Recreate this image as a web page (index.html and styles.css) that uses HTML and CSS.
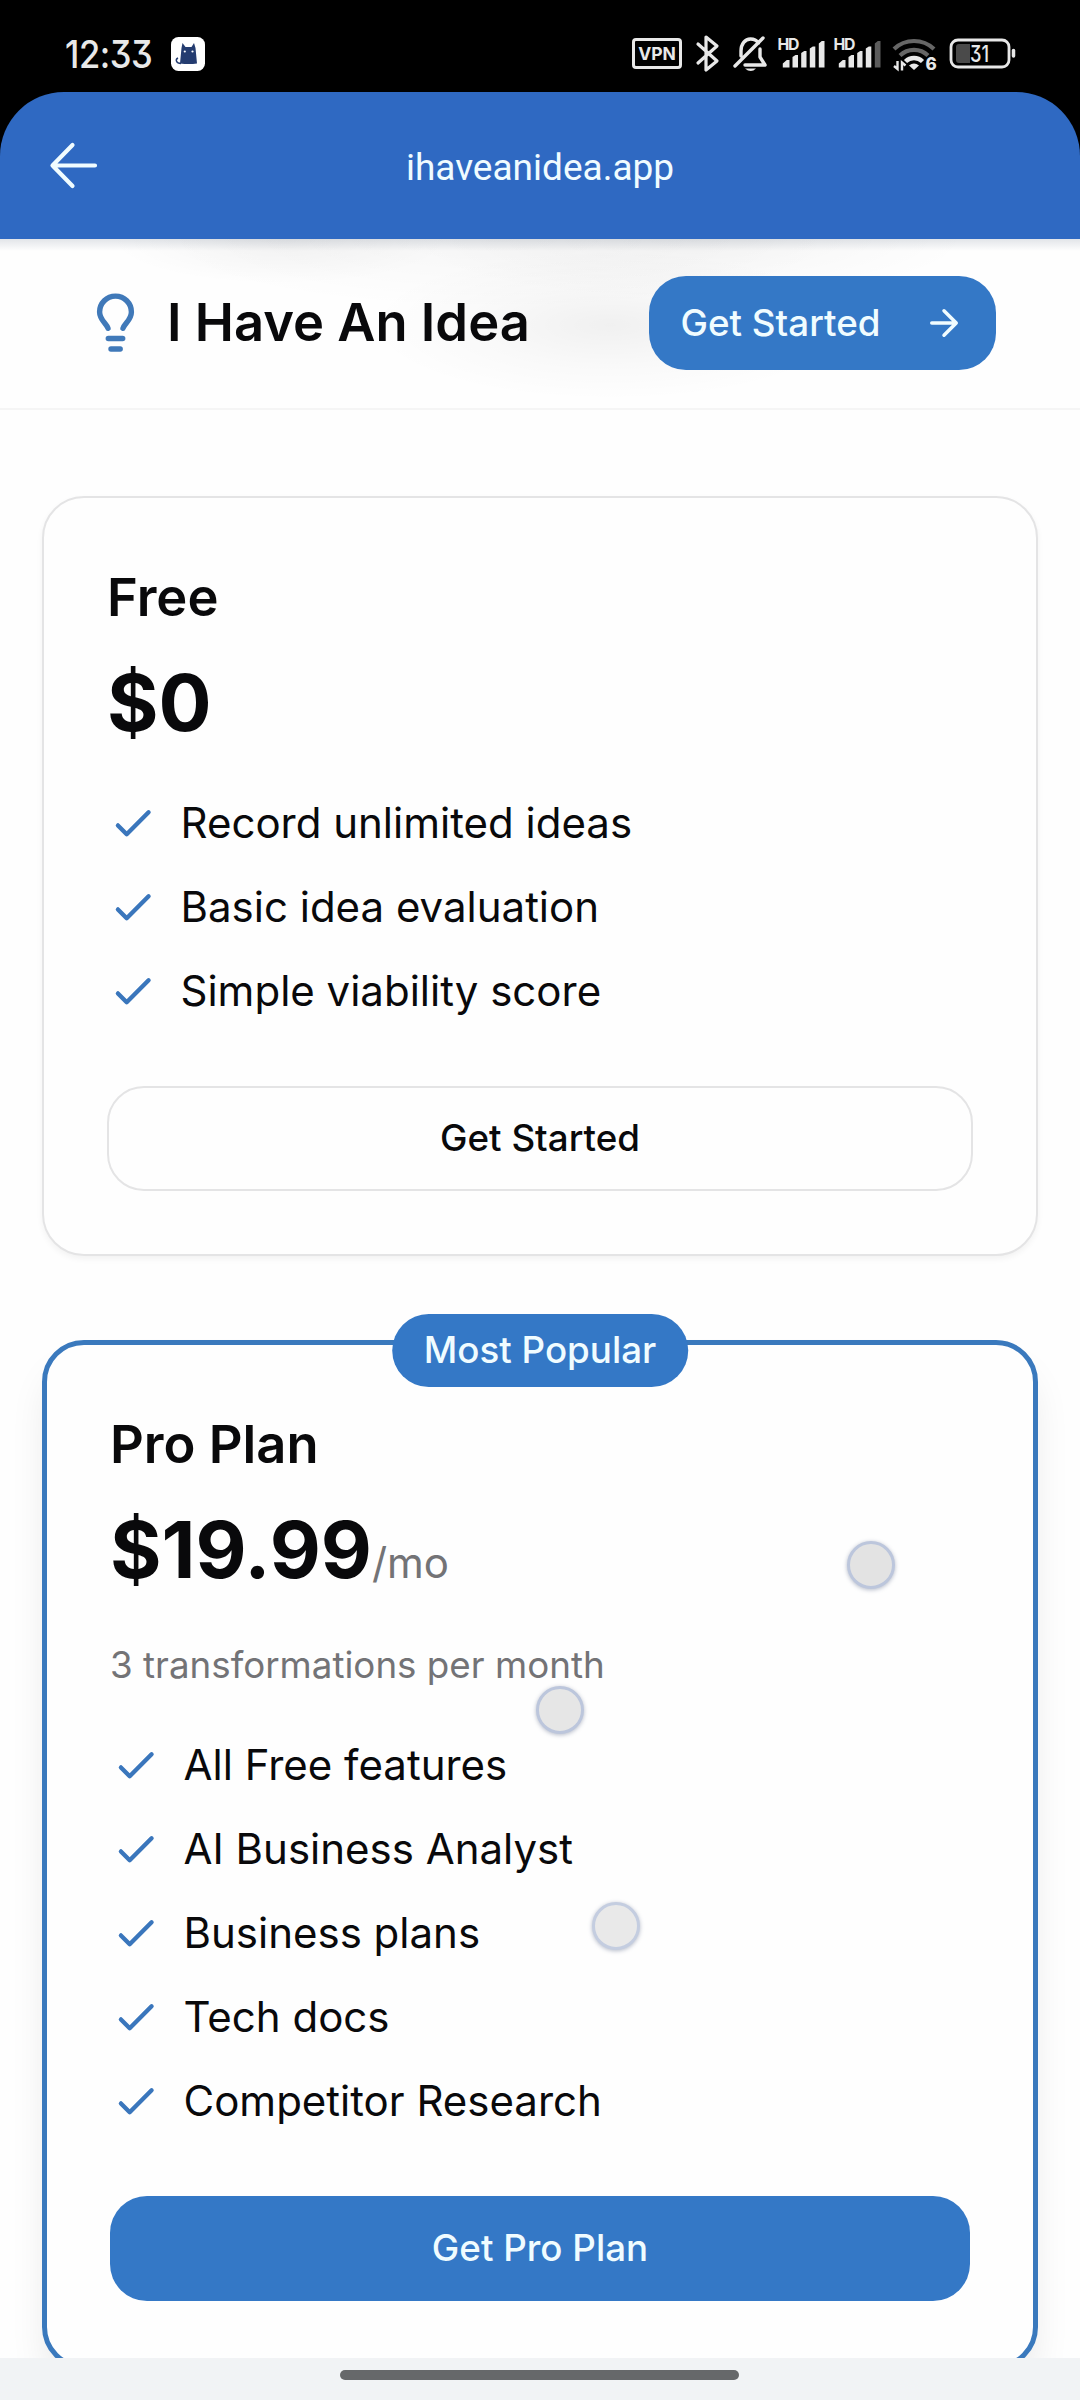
FILE: index.html
```html
<!DOCTYPE html>
<html lang="en">
<head>
<meta charset="utf-8">
<title>I Have An Idea</title>
<link rel="stylesheet" href="styles.css">
</head>
<body>
<svg class="defs" width="0" height="0"><symbol id="check" viewBox="0 0 24 24"><path d="M5 13l4 4L19 7" fill="none" stroke="currentColor" stroke-width="2" stroke-linecap="round" stroke-linejoin="round"/></symbol></svg>
<div class="screen">
  <div class="status">
    <span class="clock">12:33</span>
    <svg class="cat" width="34" height="34" viewBox="0 0 34 34"><rect width="34" height="34" rx="7.500" fill="#fff"/><path d="M11.500 6l3 4h6l2.500-4 1.500 5 1.500 15.500q-8 1-17 0L10.500 11z" fill="#243c70"/><path d="M10 26.500c-5 0-6-4-3-5.500" fill="none" stroke="#243c70" stroke-width="1.400"/><circle cx="13.800" cy="14.500" r="1.100" fill="#fff"/><circle cx="21.500" cy="14.500" r="1.100" fill="#fff"/></svg>
    <svg class="tray" width="390" height="44" viewBox="630 30 390 44" fill="none" stroke="#e8e8e8">
      <rect x="633.500" y="39.500" width="47" height="28" rx="2.500" stroke-width="3"/>
      <text x="657" y="60" class="t-vpn" text-anchor="middle">VPN</text>
      <path d="M698 44l19 17-11 9V37l11 9-19 17" stroke-width="3.200" stroke-linejoin="round" stroke-linecap="round"/>
      <path d="M741 56V51c0-7 4-12 9.500-12 4 0 6 1 8 4M760 49v8l5 8H745M763 38L735 66" stroke-width="3.400" stroke-linecap="round" stroke-linejoin="round"/>
      <path d="M745 68.500h11q-5 5-11 0z" fill="#e8e8e8" stroke="none"/>
      <text x="777.500" y="50" class="t-hd" textLength="22">HD</text>
      <path d="M782.800 67.500v-4l4-3.500h2.700v7.500zM792.500 67.500V57l3-2h2.500v12.500zM801.200 67.500V53l3-2h2.300v16.500zM809.800 67.500V48.500l3-2h2.500v21zM818.800 67.500V43.500l3-2.500h2.700v26.500z" fill="#e8e8e8" stroke="none"/>
      <text x="833.500" y="50" class="t-hd" textLength="22">HD</text>
      <path d="M838.800 67.500v-4l4-3.500h2.700v7.500zM848.500 67.500V57l3-2h2.500v12.500zM857.200 67.500V53l3-2h2.300v16.500zM865.800 67.500V48.500l3-2h2.500v21z" fill="#e8e8e8" stroke="none"/>
      <path d="M874.800 67.500V43.500l3-2.500h2.700v26.500z" fill="#5c5c5c" stroke="none"/>
      <path d="M894 49a29 29 0 0 1 40 0M900 55.500a20 20 0 0 1 28 0" stroke="#666" stroke-width="4.200"/>
      <path d="M905.500 61.500a12 12 0 0 1 17 0" stroke-width="4.400"/>
      <path d="M909 65.500q5-4 10 0l-5 4.500z" fill="#e8e8e8" stroke="none"/>
      <path d="M897.500 61v8l-3.500-3M902 70.500v-8l3.500 3" stroke-width="2.400"/>
      <text x="931" y="70" class="t-six" text-anchor="middle">6</text>
      <rect x="951" y="40" width="58" height="27" rx="7" stroke-width="2.800"/>
      <path d="M959 44h11v19h-11q-3 0-3-3V47q0-3 3-3z" fill="#4a4a4a" stroke="none"/>
      <text x="970" y="61.800" class="t-bat" textLength="19" lengthAdjust="spacingAndGlyphs">31</text>
      <path d="M1013.500 50.500v5.500" stroke-width="3.500" stroke-linecap="round"/>
    </svg>
  </div>
  <div class="appbar">
    <svg class="back" width="50" height="50" viewBox="0 0 50 50" fill="none" stroke="#f0fcff" stroke-width="4.200" stroke-linecap="round" stroke-linejoin="round"><path d="M47 24.500H4.500M24.500 4L4.500 24.500 24.500 45"/></svg>
    <span class="host">ihaveanidea.app</span>
  </div>
  <header class="header">
    <svg class="bulb" width="42" height="63" viewBox="0 0 42 63" fill="none" stroke="#4079b9" stroke-width="5.400" stroke-linecap="round"><path d="M14 37.300C12.500 32.500 5.600 29 5.600 21a15.900 15.900 0 0 1 31.800 0C37.400 29 30.500 32.500 29 37.300M14.300 47.500h14.400M17 58h9.200"/></svg>
    <h1 class="brand">I Have An Idea</h1>
    <a class="cta">Get Started<svg width="42" height="42" viewBox="0 0 24 24" fill="none" stroke="currentColor" stroke-width="2" stroke-linecap="round" stroke-linejoin="round"><path d="M5 12h14M12 5l7 7-7 7"/></svg></a>
  </header>
  <main class="plans">
    <section class="card">
      <h2 class="name">Free</h2>
      <div class="price">$0</div>
      <ul class="list">
        <li><svg class="tick"><use href="#check"/></svg><span class="feature">Record unlimited ideas</span></li>
        <li><svg class="tick"><use href="#check"/></svg><span class="feature">Basic idea evaluation</span></li>
        <li><svg class="tick"><use href="#check"/></svg><span class="feature">Simple viability score</span></li>
      </ul>
      <a class="button outline">Get Started</a>
    </section>
    <section class="card pro">
      <span class="badge">Most Popular</span>
      <h2 class="name">Pro Plan</h2>
      <div class="price">$19.99<span class="per">/mo</span></div>
      <p class="quota">3 transformations per month</p>
      <ul class="list">
        <li><svg class="tick"><use href="#check"/></svg><span class="feature">All Free features</span></li>
        <li><svg class="tick"><use href="#check"/></svg><span class="feature">AI Business Analyst</span></li>
        <li><svg class="tick"><use href="#check"/></svg><span class="feature">Business plans</span></li>
        <li><svg class="tick"><use href="#check"/></svg><span class="feature">Tech docs</span></li>
        <li><svg class="tick"><use href="#check"/></svg><span class="feature">Competitor Research</span></li>
      </ul>
      <a class="button">Get Pro Plan</a>
    </section>
  </main>
  <footer class="navbar"><span class="handle"></span></footer>
  <i class="touch touch-a"></i><i class="touch touch-b"></i><i class="touch touch-c"></i>
</div>
</body>
</html>
```
FILE: styles.css
```css
* { box-sizing: border-box; margin: 0; padding: 0; }
body { background: #fefefe; font-family: Inter, "Liberation Sans", sans-serif; color: #09090b; }
.defs { display: block; }
.screen { position: relative; width: 1080px; height: 2400px; overflow: hidden; display: flex; flex-direction: column; background: linear-gradient(#000 0 180px, #fefefe 180px); }

.status { flex: none; height: 92px; display: flex; align-items: center; padding: 0 60px 0 65px; }
.clock { width: 106px; padding-top: 16px; font-size: 38px; font-weight: 500; line-height: 44px; letter-spacing: -0.500px; color: #e8e8e8; font-feature-settings: "cv09"; white-space: nowrap; transform: scaleX(.91); transform-origin: left; }
.cat { margin-top: 16px; }
.tray { margin-left: auto; margin-top: 12px; }
.tray text { stroke: none; fill: #e8e8e8; font-family: Inter, sans-serif; font-feature-settings: "cv09"; }
.t-vpn { font-size: 17.500px; font-weight: 700; }
.t-hd { font-size: 15.800px; font-weight: 700; }
.t-six { font-size: 17px; font-weight: 800; }
.t-bat { font-size: 23px; font-weight: 500; }

.appbar { flex: none; height: 147px; display: grid; grid-template-columns: 96px 1fr 96px; align-items: center; background: #2f69c2; border-radius: 64px 64px 0 0; }
.back { margin-left: 48px; }
.host { text-align: center; font-family: Roboto, sans-serif; font-size: 37px; line-height: 44px; padding-top: 4px; color: #f0fcff; }

.header { flex: none; height: 171px; display: flex; align-items: center; padding: 0 84px 2px 94px; border-bottom: 2px solid #f5f5f5;
  background:
    linear-gradient(rgba(40, 60, 90, .13), rgba(40, 60, 90, 0) 12px),
    radial-gradient(ellipse 170px 45px at 280px 0, rgba(0, 0, 0, .045), transparent),
    radial-gradient(ellipse 340px 70px at 500px 0, rgba(0, 0, 0, .03), transparent),
    radial-gradient(ellipse 280px 60px at 690px 0, rgba(0, 0, 0, .04), transparent),
    radial-gradient(ellipse 240px 75px at 610px 86px, rgba(0, 0, 0, .055), rgba(0, 0, 0, .02) 55%, transparent),
    #fefefe; }
.brand { margin-left: 31px; font-size: 52.500px; line-height: 73.500px; font-weight: 600; white-space: nowrap; }
.cta { margin-left: auto; width: 347px; height: 94px; padding: 0 31.500px; border-radius: 37px; display: flex; align-items: center; justify-content: space-between; background: #3478c6; color: #f0fcff; font-size: 36.750px; font-weight: 500; white-space: nowrap; }

.plans { flex: 1; min-height: 0; overflow: hidden; padding: 86px 42px 0; display: flex; flex-direction: column; gap: 84px; }
.card { position: relative; flex: none; padding: 63px; border: 2px solid #e4e4e5; border-radius: 42px; background: #fefefe; box-shadow: 0 3px 6px rgba(0, 0, 0, .05); display: flex; flex-direction: column; }
.pro { border: 5px solid #3a79bd; box-shadow: 0 26px 40px -8px rgba(0, 0, 0, .1); }
.badge { position: absolute; top: -31px; left: 50%; transform: translateX(-50%); height: 73px; padding: 0 31.500px; border-radius: 37px; background: #3478c6; color: #f0fcff; font-size: 36.750px; line-height: 71px; font-weight: 500; white-space: nowrap; }
.name { font-size: 52.500px; line-height: 73.500px; font-weight: 600; }
.price { margin-top: 21px; height: 94.500px; font-size: 78.750px; line-height: 94.500px; font-weight: 700; white-space: nowrap; }
.per { font-size: 42px; font-weight: 400; color: #737376; }
.quota { margin-top: 42px; font-size: 36.750px; line-height: 52.500px; color: #737376; }
.list { margin-top: 42px; list-style: none; display: grid; gap: 21px; }
.list li { height: 63px; display: flex; align-items: center; gap: 21px; font-size: 42px; line-height: 63px; }
.feature { margin-bottom: 2px; }
.tick { width: 52.500px; height: 52.500px; color: #3a76bc; }
.button { margin-top: 63px; height: 105px; padding-bottom: 2px; border-radius: 37px; display: flex; align-items: center; justify-content: center; background: #3478c6; color: #f0fcff; font-size: 36.750px; font-weight: 500; }
.outline { background: #fefefe; color: #09090b; border: 2px solid #e4e4e5; }

.navbar { position: relative; flex: none; height: 42px; background: #f1f3f5; display: flex; justify-content: center; padding: 12px 1px 0 0; }
.handle { width: 399px; height: 10px; border-radius: 5px; background: #66686a; }

.touch { position: absolute; width: 48px; height: 48px; margin: -24px 0 0 -24px; border-radius: 50%; background: #e6e6e6; border: 3px solid #bcc6dc; box-shadow: 0 1px 4px rgba(70, 85, 120, .4); }
.touch-a { left: 871px; top: 1565px; background: #e3e3e3; }
.touch-b { left: 560px; top: 1709.500px; }
.touch-c { left: 615.500px; top: 1925.500px; background: #e9e9e9; border-color: #c4cde0; }
```
